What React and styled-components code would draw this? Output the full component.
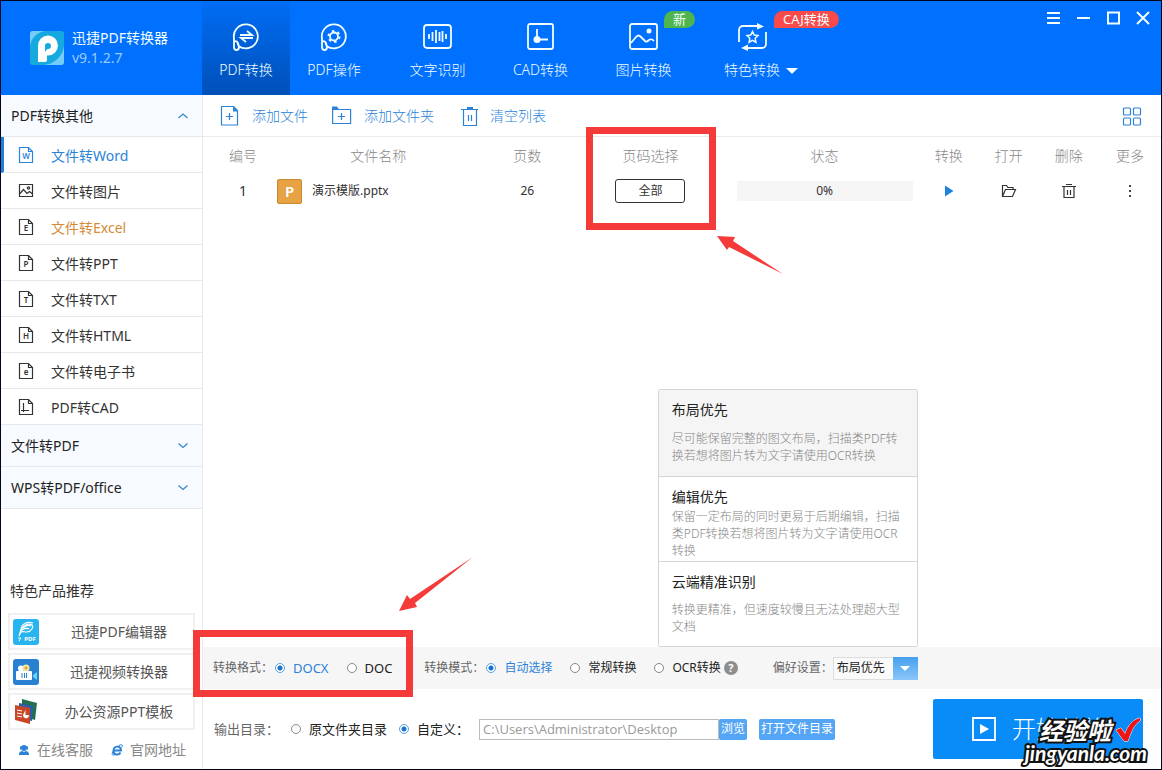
import React from 'react';
import styled, { createGlobalStyle } from 'styled-components';

const GlobalStyle = createGlobalStyle`
    * {
        box-sizing: border-box;
        margin: 0;
        padding: 0;
    }

    body {
        background: white;
        color: #333;
        font-family: 'Noto Sans', 'Noto Sans CJK SC', sans-serif;
        font-size: 14px;
        line-height: 20px;
    }

    button, input, select {
        font: inherit;
        color: inherit;
        border: none;
        background: none;
    }

    button {
        cursor: pointer;
    }

    a {
        color: inherit;
        text-decoration: none;
    }

    svg {
        display: block;
        flex: none;
    }
`

const Window = styled.div`
    min-height: 100vh;
    display: flex;
    flex-direction: column;
    border: 1px solid #00051c;
`

const Header = styled.header`
    height: 94px;
    display: flex;
    background: #0070ff;
    color: #f2fdff;
`

const Brand = styled.div`
    width: 201px;
    padding-left: 29px;
    display: flex;
    align-items: center;
    gap: 8px;

    h1 {
        font-size: 14px;
        font-weight: 400;
    }

    p {
        color: #9cc9ff;
    }
`

const Nav = styled.nav`
    display: flex;
`

const WideNav = styled.div`
    margin-left: 8px;
    display: flex;
`

const NavItem = styled.button`
    position: relative;
    width: ${props => props.$width || 88}px;
    padding-top: 21px;
    display: flex;
    flex-direction: column;
    align-items: center;
    gap: 8px;
    background: ${props => props.$active ? 'linear-gradient(#006df5, #0050b8)' : 'none'};
`

const NavLabel = styled.span`
    position: relative;
    font-weight: 300;
`

const Caret = styled.i`
    position: absolute;
    top: 8px;
    left: calc(100% + 6px);
    border: 6px solid transparent;
    border-top-color: #f2fdff;
    border-bottom: none;
`

const Badge = styled.span`
    position: absolute;
    top: 10px;
    left: ${props => props.$left}px;
    padding: 0 9px;
    border-radius: 9px 9px 9px 0;
    background: ${props => props.$color};
    font-size: 13px;
    line-height: 17px;
    white-space: nowrap;
`

const Controls = styled.div`
    margin-left: auto;
    padding-right: 3px;
    display: flex;

    button {
        width: 30px;
        height: 33px;
        display: flex;
        align-items: center;
        justify-content: center;
    }
`

const Body = styled.div`
    flex: 1;
    display: flex;
`

const Sidebar = styled.aside`
    width: 202px;
    flex: none;
    display: flex;
    flex-direction: column;
    border-right: 1px solid #e8eaec;
`

const GroupHeader = styled.button`
    width: 100%;
    height: 42px;
    padding: 0 13px 0 10px;
    display: flex;
    align-items: center;
    justify-content: space-between;
    border-bottom: 1px solid #e6e9ec;
    background: #f7fbff;
    color: #222;
`

const SideItem = styled.a`
    height: 36px;
    padding-left: ${props => props.$active ? 13 : 16}px;
    display: flex;
    align-items: center;
    gap: 16px;
    border-bottom: 1px solid #e6e9ec;
    border-left: ${props => props.$active ? '3px solid #1f7fdc' : 'none'};
    color: ${props => props.$active ? '#2b83d8' : '#333'};

    span {
        padding-top: 2px;
        color: ${props => props.$hot ? '#d58b35' : 'inherit'};
    }
`

const Promos = styled.section`
    margin-top: auto;
    padding: 0 7px 9px;
    display: flex;
    flex-direction: column;
    gap: 3px;

    h2 {
        margin-bottom: 9px;
        padding-left: 2px;
        font-size: 14px;
        font-weight: 400;
    }
`

const Promo = styled.a`
    height: 37px;
    padding-left: 3px;
    display: flex;
    align-items: center;
    border: 2px solid #f0f0f0;
    color: #555;

    span {
        flex: 1;
        padding-left: 6px;
        text-align: center;
    }
`

const Links = styled.div`
    margin-top: 7px;
    padding: 0 9px 0 10px;
    display: flex;
    justify-content: space-between;
    color: #888;

    a {
        display: flex;
        align-items: center;
        gap: 7px;
    }
`

const Main = styled.main`
    flex: 1;
    min-width: 0;
    display: flex;
    flex-direction: column;
`

const Toolbar = styled.div`
    height: 42px;
    padding: 0 19px 0 17px;
    display: flex;
    align-items: center;
    gap: 24px;
    border-bottom: 1px solid #e8eaec;
    color: #2b83d8;
`

const Tool = styled.button`
    margin-left: ${props => props.$end ? 'auto' : '0'};
    display: flex;
    align-items: center;
    gap: 12px;
    font-weight: 300;
`

const FileTable = styled.table`
    width: 100%;
    table-layout: fixed;
    border-spacing: 0;

    th {
        position: relative;
        height: 38px;
        color: #888;
        font-weight: 300;
    }

    td {
        height: 32px;
        font-size: 12px;
        text-align: center;
    }

    th:first-child, td:first-child {
        padding-left: 11px;
    }

    td:first-child {
        font-size: 14px;
    }
`

const FileName = styled.div`
    padding-left: 5px;
    display: flex;
    align-items: center;
    gap: 10px;
`

const FileMark = styled.b`
    width: 25px;
    height: 25px;
    border: 1px solid #c98a2e;
    border-radius: 2px;
    background: #e6a243;
    color: white;
    font-size: 15px;
    font-weight: 600;
    line-height: 22px;
`

const PagesButton = styled.button`
    width: 70px;
    height: 24px;
    border: 1px solid #333;
    border-radius: 3px;
`

const Progress = styled.div`
    margin: 0 6px;
    background: #f5f5f5;
    line-height: 20px;
`

const IconButton = styled.button`
    width: 20px;
    height: 20px;
    display: inline-flex;
    align-items: center;
    justify-content: center;
    vertical-align: middle;
`

const Options = styled.div`
    height: 42px;
    margin-top: auto;
    padding-left: 10px;
    display: flex;
    align-items: center;
    background: #f6f6f6;
    font-size: 12px;
    white-space: nowrap;
`

const OptionGroup = styled.div`
    position: relative;
    margin-right: 32px;
    display: flex;
    align-items: center;
    gap: 18px;
`

const OptionLabel = styled.span`
    margin-right: ${props => props.$gap || -16}px;
    color: #666;
`

const RadioLabel = styled.label`
    display: flex;
    align-items: center;
    gap: 8px;
    color: #222;
    font-size: ${props => props.$size || 12}px;

    &:has(:checked) {
        color: ${props => props.$plain ? '#222' : '#2b83d8'};
    }

    input {
        width: 10px;
        height: 10px;
        appearance: none;
        border: 1px solid #888;
        border-radius: 50%;
        background: white;
    }

    input:checked {
        border-color: #5c9fdf;
        background: radial-gradient(#1673d1 0 2px, white 3px);
    }
`

const Help = styled.button`
    width: 14px;
    height: 14px;
    margin-left: -15px;
    border-radius: 50%;
    background: #8e8e8e;
    color: white;
    font-size: 11px;
    font-weight: 700;
    line-height: 14px;
`

const Preference = styled.div`
    position: relative;
    margin-left: 3px;
    display: flex;
    align-items: center;
    color: #666;
`

const SelectBox = styled.div`
    position: relative;
    width: 85px;

    select {
        width: 100%;
        height: 23px;
        padding-left: 3px;
        display: block;
        appearance: none;
        border: 1px solid #ddd;
        background: #fafafa;
        color: #222;
    }
`

const SelectArrow = styled.span`
    position: absolute;
    top: 0;
    right: 0;
    width: 25px;
    height: 23px;
    display: flex;
    align-items: center;
    justify-content: center;
    background: linear-gradient(#45a0ee, #8cc6f8);
    pointer-events: none;

    i {
        border: 5px solid transparent;
        border-top-color: white;
        border-bottom: none;
    }
`

const Popup = styled.ul`
    position: absolute;
    right: 0;
    bottom: calc(100% + 10px);
    width: 260px;
    border: 1px solid #d5d5d5;
    border-radius: 2px;
    background: white;
    list-style: none;
    white-space: normal;
`

const PopupItem = styled.li`
    min-height: ${props => props.$active ? 86 : 85}px;
    padding: 10px 14px 1px 13px;
    display: flex;
    flex-direction: column;
    border-top: ${props => props.$active ? 'none' : '1px solid #d5d5d5'};
    background: ${props => props.$active ? '#f5f5f5' : 'white'};

    h3 {
        color: #222;
        font-size: 14px;
        font-weight: 400;
    }

    p {
        margin: auto 0;
        color: #888;
        font-weight: 300;
        line-height: 17px;
    }
`

const Output = styled.div`
    padding: 10px 18px 10px 11px;
    display: flex;
    align-items: center;
    gap: 12px;
    font-size: 13px;
    white-space: nowrap;
`

const PathBox = styled.div`
    margin-left: -2px;
    display: flex;

    input {
        width: 240px;
        height: 21px;
        padding-left: 3px;
        border: 1px solid #bbb;
        color: #999;
        font-family: 'Open Sans', 'Noto Sans CJK SC', sans-serif;
    }
`

const SmallButton = styled.button`
    height: 21px;
    padding: 0 2px;
    border-radius: 2px;
    background: #54a5f5;
    color: white;
    font-size: 12px;
`

const StartButton = styled.button`
    position: relative;
    width: 210px;
    height: 60px;
    margin-left: auto;
    padding-left: 39px;
    display: flex;
    align-items: center;
    gap: 16px;
    border-radius: 2px;
    background: #0a8cf8;
    color: white;
    font-size: 24px;
    font-weight: 300;
`

const Watermark = styled.span`
    position: absolute;
    right: -4px;
    bottom: -4px;
    display: flex;
    flex-direction: column;
    align-items: flex-end;
    color: white;
    font-style: italic;
    font-weight: 700;
    paint-order: stroke;
    -webkit-text-stroke: 4px #111;

    span {
        display: flex;
        align-items: center;
        gap: 4px;
        padding-right: 6px;
        font-size: 24px;
        line-height: 25px;
    }

    small {
        font-family: Lato, sans-serif;
        font-size: 21px;
        line-height: 20px;
    }
`

const Frame = styled.i`
    position: absolute;
    z-index: 2;
    top: ${props => props.$top}px;
    left: ${props => props.$left};
    width: ${props => props.$width}px;
    height: ${props => props.$height}px;
    border: 7px solid #f53a3a;
    pointer-events: none;

    svg {
        position: absolute;
        top: ${props => props.$arrowTop}px;
        left: ${props => props.$arrowLeft}px;
        fill: #f53a3a;
    }
`

const Icon = ({ w = 30, h = w, stroke = 1.5, children }) => (
    <svg width={w} height={h} viewBox={`0 0 ${w} ${h}`} fill='none' stroke='currentColor' strokeWidth={stroke}>
        {children}
    </svg>
)

const bubble = <path d='M3 17.500v7.500c0 4 5 4 5 0l-.4-1A12 12 0 1 0 3 16.500V20c2-2 4.500 0 4.700 4' />

const sideItems = [
    { label: '文件转Word', letter: 'W', active: true },
    { label: '文件转图片', picture: true },
    { label: '文件转Excel', letter: 'E', hot: true },
    { label: '文件转PPT', letter: 'P' },
    { label: '文件转TXT', letter: 'T' },
    { label: '文件转HTML', letter: 'H' },
    { label: '文件转电子书', letter: 'e' },
    { label: 'PDF转CAD', cad: true },
]

const SideIcon = ({ item }) => {
    if (item.picture) {
        return (
            <Icon w={18} stroke={1.2}>
                <path d='M2.500 2.500h13v12h-13zM3 11.500l3.500-4 3.500 4 2.500-2 3 2.500' />
                <circle cx='11.500' cy='6' r='1.200' />
            </Icon>
        )
    }
    return (
        <Icon w={18} stroke={1.2}>
            <path d='M2.500 1.500h9l4 4v11h-13zM11.500 1.500v4h4' />
            {item.cad && <path d='M6.500 5v8.500M4 12.500h8M6.500 10.500v3.500' />}
            {item.letter && (
                <text x='9' y='13' textAnchor='middle' fontSize='8' fontWeight='600' fill='currentColor' stroke='none'>
                    {item.letter}
                </text>
            )}
        </Icon>
    )
}

const Chevron = ({ up }) => (
    <Icon w={12} h={8} stroke={1.2}><path d={up ? 'M1.500 6l4.500-4 4.500 4' : 'M1.500 1.500l4.500 4 4.500-4'} stroke='#3186c9' /></Icon>
)

const Trash = ({ w = 20 }) => (
    <Icon w={w} stroke={1.2}>
        {w === 20
            ? <><path d='M3 3.500h17M5.500 4v15.500h13V4M10.500 9v6M13.500 9v6' /><path d='M9 1h6v3H9z' fill='currentColor' stroke='none' /></>
            : <path d='M1 3.500h14M5 1.500h6M3 4v10.500h10V4M6.500 7v5M9.500 7v5' />}
    </Icon>
)

const App = () => {
    return (
        <Window>
            <GlobalStyle />
            <Header>
                <Brand>
                    <svg width='34' height='34' viewBox='0 0 34 34'>
                        <rect width='34' height='34' rx='3' fill='#16a9df' />
                        <path d='M0 17A17 17 0 0 1 17 0H3a3 3 0 0 0-3 3zM34 15v16a3 3 0 0 1-3 3H14A22 22 0 0 0 34 15z' fill='#75cdf5' />
                        <path d='M8 31V15a10 10 0 1 1 10 9.500h-1V29q0 2-2 2z' fill='white' />
                        <path d='M15 21v-6a3 3 0 1 1 3 3q-1.500 0-3 3z' fill='#16a9df' />
                    </svg>
                    <div>
                        <h1>迅捷PDF转换器</h1>
                        <p>v9.1.2.7</p>
                    </div>
                </Brand>
                <Nav>
                    <NavItem $active>
                        <Icon stroke={1.8}>
                            {bubble}
                            <path d='M9 13h12l-5-4M22 16H10l5 4' />
                        </Icon>
                        <NavLabel>PDF转换</NavLabel>
                    </NavItem>
                    <NavItem>
                        <Icon stroke={1.8}>
                            {bubble}
                            <circle cx='15' cy='14.500' r='4' />
                            <circle cx='15' cy='14.500' r='5.500' strokeWidth='2' strokeDasharray='2.500 3.260' />
                        </Icon>
                        <NavLabel>PDF操作</NavLabel>
                    </NavItem>
                    <WideNav>
                        <NavItem $width={103}>
                            <Icon stroke={1.8}>
                                <rect x='1' y='3' width='27' height='23' rx='3' />
                                <path d='M6 12v5M9.500 10v9M13 8v13M16.500 10v9M19.500 9v11M23 12v5' />
                            </Icon>
                            <NavLabel>文字识别</NavLabel>
                        </NavItem>
                        <NavItem $width={103}>
                            <Icon stroke={1.8}>
                                <rect x='2' y='2' width='25' height='25' rx='2' />
                                <path d='M11 7v11M11 17.500h11' />
                                <circle cx='11' cy='17.500' r='3.500' fill='currentColor' stroke='none' />
                            </Icon>
                            <NavLabel>CAD转换</NavLabel>
                        </NavItem>
                        <NavItem $width={103}>
                            <Icon stroke={1.8}>
                                <rect x='1' y='2' width='27' height='25' rx='2' />
                                <path d='M2 21l5-6c2-2 3-2 5 0l4 4c1 1 2 1 4-1 2-1.500 3-1 5 1' />
                                <circle cx='20' cy='9' r='2.500' fill='currentColor' stroke='none' />
                            </Icon>
                            <NavLabel>图片转换</NavLabel>
                            <Badge $left={72} $color='#4fb54f'>新</Badge>
                        </NavItem>
                        <NavItem $width={114}>
                            <Icon stroke={1.8}>
                                <path d='M2 20V8a4 4 0 0 1 4-4h16M29 10v12a4 4 0 0 1-4 4H9' />
                                <path d='M20 1l7 3.500-7 3zM11 22.500L4 26l7 3z' fill='currentColor' stroke='none' />
                                <path d='M15.500 9.500l1.700 3.500 3.800.6-2.800 2.700.7 3.900-3.400-1.900-3.400 1.900.7-3.900-2.800-2.700 3.800-.6z' strokeWidth='1.500' />
                            </Icon>
                            <NavLabel>特色转换<Caret /></NavLabel>
                            <Badge $left={79} $color='#fb4a4a'>CAJ转换</Badge>
                        </NavItem>
                    </WideNav>
                </Nav>
                <Controls>
                    <button aria-label='菜单'><Icon w={14} stroke={2}><path d='M1 2h13M1 7h13M1 12h13' /></Icon></button>
                    <button aria-label='最小化'><Icon w={14} stroke={2}><path d='M1 7h13' /></Icon></button>
                    <button aria-label='最大化'><Icon w={14} stroke={2}><path d='M2 1.500h11v11H2z' /></Icon></button>
                    <button aria-label='关闭'><Icon w={14} stroke={2}><path d='M1 1l12 12M13 1L1 13' /></Icon></button>
                </Controls>
            </Header>
            <Body>
                <Sidebar>
                    <GroupHeader>PDF转换其他<Chevron up /></GroupHeader>
                    {sideItems.map(item => (
                        <SideItem key={item.label} href='#' $active={item.active} $hot={item.hot}>
                            <SideIcon item={item} />
                            <span>{item.label}</span>
                        </SideItem>
                    ))}
                    <GroupHeader>文件转PDF<Chevron /></GroupHeader>
                    <GroupHeader>WPS转PDF/office<Chevron /></GroupHeader>
                    <Promos>
                        <h2>特色产品推荐</h2>
                        <Promo href='#'>
                            <svg width='26' height='26' viewBox='0 0 26 26' fill='none' stroke='white'>
                                <rect width='26' height='26' rx='3' fill='#28b4ee' stroke='none' />
                                <path d='M6 17l3-10c3-4 8-4 11-3M8 12c2-6 7-8 11-6 2 2-1 7-5 7-3 0-4-1-6 0M10 9c3-3 6-3 8-2M9 11c3-2 6-2 7-1M6 17l2-4' strokeWidth='1.200' />
                                <text x='17' y='22' textAnchor='middle' fontSize='6' fontWeight='700' fill='white' stroke='none'>PDF</text>
                                <path d='M5 19h3l-2 3' />
                            </svg>
                            <span>迅捷PDF编辑器</span>
                        </Promo>
                        <Promo href='#'>
                            <svg width='26' height='26' viewBox='0 0 26 26'>
                                <rect width='26' height='26' rx='3' fill='#2a80d0' />
                                <circle cx='8' cy='9.500' r='3' fill='white' />
                                <circle cx='13' cy='9' r='3.500' fill='#f3e6a0' />
                                <circle cx='13' cy='9' r='1.500' fill='#e8a030' />
                                <rect x='3' y='12' width='16' height='9' rx='1' fill='white' />
                                <path d='M20 16l4-3v8l-4-3z' fill='#63d5f5' />
                                <path d='M9 14v5M11.500 14v5M13.500 14v5' stroke='#2a80d0' />
                            </svg>
                            <span>迅捷视频转换器</span>
                        </Promo>
                        <Promo href='#'>
                            <svg width='26' height='26' viewBox='0 0 26 26'>
                                <path d='M9 0l15 4-2 17-13-4z' fill='#22704d' />
                                <path d='M6 4l14 3-1 15-13-3z' fill='#2e5da8' />
                                <path d='M2 6l15 3v16L2 21z' fill='#c64626' />
                                <path d='M4 11l5 1M4 14l5 1M4 17l5 1' stroke='white' />
                                <path d='M12.500 11v5h3.500a3 3 0 1 1-5-2z' fill='white' />
                            </svg>
                            <span>办公资源PPT模板</span>
                        </Promo>
                        <Links>
                            <a href='#'>
                                <svg width='12' height='12' viewBox='0 0 12 12' fill='#2b83d8'>
                                    <circle cx='6' cy='4' r='3' />
                                    <path d='M2 2.500h8v3H9V4H3v1.500H2zM1 10c0-2 2-3 3.500-3L6 8l1.500-1C9 7 11 8 11 10v1H1z' />
                                </svg>
                                在线客服
                            </a>
                            <a href='#'>
                                <svg width='12' height='12' viewBox='0 0 12 12' fill='none' stroke='#2b83d8' strokeWidth='2'>
                                    <path d='M3 6.500h7C10 1 2.500 1.500 2.500 7c0 4.500 5.500 4.500 7 1.500' />
                                    <path d='M8 1.500c4-2 4 0 2.500 2M2.500 7C0 10 1 12 4.500 10.500' strokeWidth='1' />
                                </svg>
                                官网地址
                            </a>
                        </Links>
                    </Promos>
                </Sidebar>
                <Main>
                    <Toolbar>
                        <Tool>
                            <Icon w={20} stroke={1.2}>
                                <path d='M1.500 0.500h12l4 4v14.500h-16zM9.500 7v7M6 10.500h7' />
                                <path d='M13 0.500l5 5h-5z' fill='currentColor' stroke='none' />
                            </Icon>
                            添加文件
                        </Tool>
                        <Tool>
                            <Icon w={20} stroke={1.2}>
                                <path d='M.6 3.500h18v14H.6zM9.500 7v7M6 10.500h7' />
                                <path d='M0 0.500h5l2 3H0z' fill='currentColor' stroke='none' />
                            </Icon>
                            添加文件夹
                        </Tool>
                        <Tool><Trash />清空列表</Tool>
                        <Tool $end aria-label='视图'>
                            <Icon w={20} stroke={1.2}>
                                <rect x='1.500' y='2' width='7' height='7' rx='1' />
                                <rect x='11.500' y='2' width='7' height='7' rx='1' />
                                <rect x='1.500' y='12' width='7' height='7' rx='1' />
                                <rect x='11.500' y='12' width='7' height='7' rx='1' />
                            </Icon>
                        </Tool>
                    </Toolbar>
                    <FileTable>
                        <colgroup>
                            {[69, 212, 86, 160, 188, 60, 60, 60, 62].map((width, index) => <col key={index} width={width} />)}
                        </colgroup>
                        <thead>
                            <tr>
                                <th>编号</th>
                                <th>文件名称</th>
                                <th>页数</th>
                                <th>
                                    页码选择
                                    <Frame $top={-10} $left='calc(50% - 64px)' $width={130} $height={103} $arrowLeft={124} $arrowTop={102}>
                                        <svg width='66' height='38' viewBox='0 0 66 38'><path d='M0 0l18 1-2 4 50 33-54-27-2 3z' /></svg>
                                    </Frame>
                                </th>
                                <th>状态</th>
                                <th>转换</th>
                                <th>打开</th>
                                <th>删除</th>
                                <th>更多</th>
                            </tr>
                        </thead>
                        <tbody>
                            <tr>
                                <td>1</td>
                                <td><FileName><FileMark>P</FileMark>演示模版.pptx</FileName></td>
                                <td>26</td>
                                <td><PagesButton>全部</PagesButton></td>
                                <td><Progress>0%</Progress></td>
                                <td>
                                    <IconButton aria-label='转换'>
                                        <Icon w={16}><path d='M4 2.500l8.500 5.500L4 13.500z' fill='#1f82e0' stroke='none' /></Icon>
                                    </IconButton>
                                </td>
                                <td>
                                    <IconButton aria-label='打开'>
                                        <Icon w={16} stroke={1.2}><path d='M1.500 13.500v-11h4l1.500 2h5v2M1.500 13.500l3-7h10l-3 7z' /></Icon>
                                    </IconButton>
                                </td>
                                <td><IconButton aria-label='删除'><Trash w={16} /></IconButton></td>
                                <td>
                                    <IconButton aria-label='更多'>
                                        <Icon w={16}><path d='M7 2h2v2H7zM7 7h2v2H7zM7 12h2v2H7z' fill='#444' stroke='none' /></Icon>
                                    </IconButton>
                                </td>
                            </tr>
                        </tbody>
                    </FileTable>
                    <Options>
                        <OptionGroup>
                            <OptionLabel>转换格式：</OptionLabel>
                            <RadioLabel $size={13}><input type='radio' name='format' defaultChecked />DOCX</RadioLabel>
                            <RadioLabel $size={13}><input type='radio' name='format' />DOC</RadioLabel>
                            <Frame $top={-28} $left='-20px' $width={220} $height={67} $arrowLeft={199} $arrowTop={-80}>
                                <svg width='74' height='54' viewBox='0 0 74 54'><path d='M0 54l8-16 3 4L74 0 16 46l2 4z' /></svg>
                            </Frame>
                        </OptionGroup>
                        <OptionGroup>
                            <OptionLabel>转换模式：</OptionLabel>
                            <RadioLabel><input type='radio' name='mode' defaultChecked />自动选择</RadioLabel>
                            <RadioLabel><input type='radio' name='mode' />常规转换</RadioLabel>
                            <RadioLabel><input type='radio' name='mode' />OCR转换</RadioLabel>
                            <Help>?</Help>
                        </OptionGroup>
                        <Preference>
                            <label htmlFor='preference'>偏好设置：</label>
                            <SelectBox>
                                <select id='preference'>
                                    <option>布局优先</option>
                                    <option>编辑优先</option>
                                    <option>云端精准识别</option>
                                </select>
                                <SelectArrow><i /></SelectArrow>
                            </SelectBox>
                            <Popup>
                                <PopupItem $active>
                                    <h3>布局优先</h3>
                                    <p>尽可能保留完整的图文布局，扫描类PDF转换若想将图片转为文字请使用OCR转换</p>
                                </PopupItem>
                                <PopupItem>
                                    <h3>编辑优先</h3>
                                    <p>保留一定布局的同时更易于后期编辑，扫描类PDF转换若想将图片转为文字请使用OCR转换</p>
                                </PopupItem>
                                <PopupItem>
                                    <h3>云端精准识别</h3>
                                    <p>转换更精准，但速度较慢且无法处理超大型文档</p>
                                </PopupItem>
                            </Popup>
                        </Preference>
                    </Options>
                    <Output>
                        <OptionLabel $gap='0'>输出目录：</OptionLabel>
                        <RadioLabel $plain $size={13}><input type='radio' name='output' />原文件夹目录</RadioLabel>
                        <RadioLabel $plain $size={13}><input type='radio' name='output' defaultChecked />自定义：</RadioLabel>
                        <PathBox>
                            <input type='text' aria-label='输出目录' defaultValue='C:\Users\Administrator\Desktop' />
                            <SmallButton>浏览</SmallButton>
                        </PathBox>
                        <SmallButton>打开文件目录</SmallButton>
                        <StartButton>
                            <Icon w={24} stroke={1.8}>
                                <path d='M1 1h22v22H1z' />
                                <path d='M8 7l9 5-9 5z' fill='currentColor' stroke='none' />
                            </Icon>
                            开始转换
                            <Watermark>
                                <span>
                                    经验啦
                                    <svg width='26' height='26' viewBox='0 0 26 26'>
                                        <path d='M1 13l5-2 4 6C13 9 17 3 25 1v3c-6 3-9 11-12 20H9z' fill='#f01414' stroke='white' />
                                    </svg>
                                </span>
                                <small>jingyanla.com</small>
                            </Watermark>
                        </StartButton>
                    </Output>
                </Main>
            </Body>
        </Window>
    )
}

export default App;
